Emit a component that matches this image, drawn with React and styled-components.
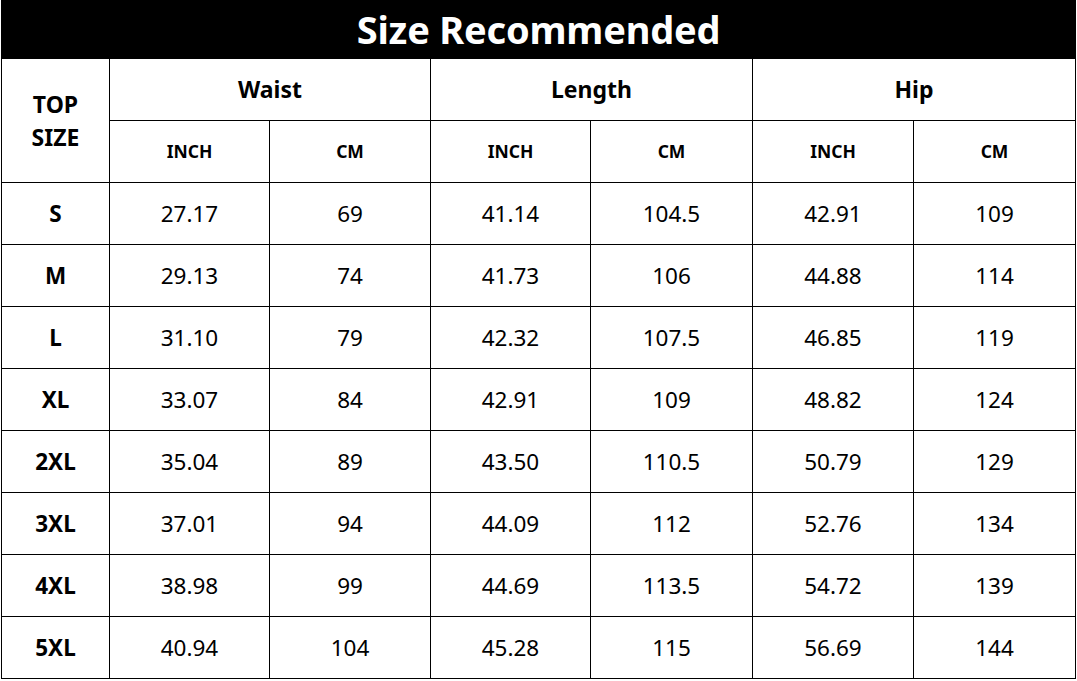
import React from 'react';
import styled, { createGlobalStyle } from 'styled-components';

const GlobalStyle = createGlobalStyle`
  body {
    margin: 0;
    background: #fff;
    font-family: "Noto Sans", "Open Sans", sans-serif;
  }
`;

const Chart = styled.div`
  display: grid;
  grid-template-columns: 107px 159px 160px 159px 161px 160px 161px;
  grid-template-rows: 57px;
  grid-auto-rows: 61px;
  gap: 1px;
  padding: 1px;
  margin-left: 1px;
  width: max-content;
  background: #000;
`;

const Title = styled.div`
  grid-column: 1 / -1;
  display: flex;
  align-items: center;
  justify-content: center;
  background: #000;
  color: #fff;
  font-size: 38px;
  font-weight: 700;
  letter-spacing: -0.2px;
  padding-bottom: 1px;
`;

const Cell = styled.div`
  display: flex;
  align-items: center;
  justify-content: center;
  text-align: center;
  background: #fff;
  color: #000;
  font-size: ${({ size }) => size || 22.5}px;
  font-weight: ${({ bold }) => (bold ? 700 : 400)};
  line-height: 1.4;
  grid-column: ${({ cols }) => (cols ? `span ${cols}` : 'auto')};
  grid-row: ${({ rows }) => (rows ? `span ${rows}` : 'auto')};
  padding-bottom: ${({ lift }) => lift || 0}px;
`;

const groups = ['Waist', 'Length', 'Hip'];

const rows = [
  ['S', '27.17', '69', '41.14', '104.5', '42.91', '109'],
  ['M', '29.13', '74', '41.73', '106', '44.88', '114'],
  ['L', '31.10', '79', '42.32', '107.5', '46.85', '119'],
  ['XL', '33.07', '84', '42.91', '109', '48.82', '124'],
  ['2XL', '35.04', '89', '43.50', '110.5', '50.79', '129'],
  ['3XL', '37.01', '94', '44.09', '112', '52.76', '134'],
  ['4XL', '38.98', '99', '44.69', '113.5', '54.72', '139'],
  ['5XL', '40.94', '104', '45.28', '115', '56.69', '144'],
];

export default function App() {
  return (
    <>
      <GlobalStyle />
      <Chart>
        <Title>Size Recommended</Title>
        <Cell rows={2} bold size={23}>TOP<br />SIZE</Cell>
        {groups.map(g => (
          <Cell key={g} cols={2} bold size={23}>{g}</Cell>
        ))}
        {groups.map(g => (
          <React.Fragment key={g}>
            <Cell bold size={17.5}>INCH</Cell>
            <Cell bold size={17.5}>CM</Cell>
          </React.Fragment>
        ))}
        {rows.map(r => (
          <React.Fragment key={r[0]}>
            {r.map((v, i) => (
              <Cell key={i} bold={i === 0}>{v}</Cell>
            ))}
          </React.Fragment>
        ))}
      </Chart>
    </>
  );
}
